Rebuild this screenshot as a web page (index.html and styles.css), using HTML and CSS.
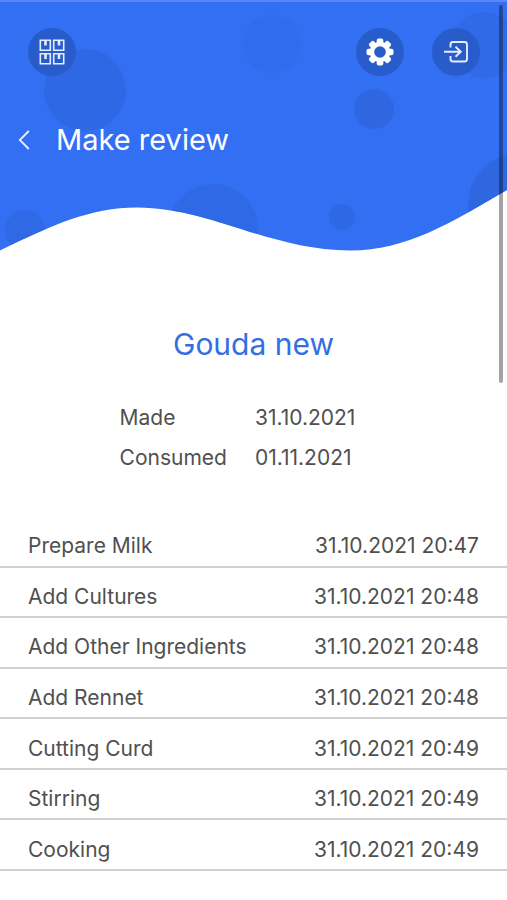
FILE: index.html
```html
<!DOCTYPE html>
<html lang="en">
<head>
<meta charset="utf-8">
<meta name="viewport" content="width=device-width, initial-scale=1">
<title>Make review</title>
<link rel="stylesheet" href="styles.css">
</head>
<body>
<header class="hero">
  <svg class="hero-art" viewBox="0 0 507 252" preserveAspectRatio="none" aria-hidden="true">
    <defs>
      <clipPath id="wave">
        <path d="M0 0H507V190C450 223 407 250.500 350 250.500C270 250.500 210 207.500 137 207.500C90 207.500 50 226 0 250.500Z"/>
      </clipPath>
    </defs>
    <g clip-path="url(#wave)">
      <rect width="507" height="252" fill="#336ff3"/>
      <rect width="507" height="2" fill="#5788f5"/>
      <g fill="#2f67e0">
        <circle cx="85" cy="90" r="41" opacity=".85"/>
        <circle cx="272" cy="44" r="29" opacity=".35"/>
        <circle cx="484" cy="45" r="33" opacity=".6"/>
        <circle cx="374" cy="109" r="20"/>
        <circle cx="25" cy="230" r="20" opacity=".7"/>
        <circle cx="213" cy="229" r="45" opacity=".7"/>
        <circle cx="342" cy="217" r="13" opacity=".85"/>
        <circle cx="520" cy="205" r="52"/>
      </g>
    </g>
  </svg>
  <nav class="toolbar">
    <button class="round" type="button" aria-label="Inventory">
      <svg width="26" height="26" viewBox="0 0 26 26" fill="none" stroke="#e4edff" stroke-width="1.600">
        <path d="M1.300 1.300h10v10h-10zM14.700 1.300h10v10h-10zM1.300 14.700h10v10h-10zM14.700 14.700h10v10h-10z"/>
        <path stroke-width="2.600" d="M6.500 1.300v5.200M20 1.300v5.200M6.500 14.700v5.200M20 14.700v5.200"/>
      </svg>
    </button>
    <button class="round settings" type="button" aria-label="Settings">
      <svg width="28" height="28" viewBox="0 0 28 28">
        <g fill="#fff">
          <g>
            <rect x="10.700" y=".5" width="6.600" height="27" rx="2"/>
            <rect x=".5" y="10.700" width="27" height="6.600" rx="2"/>
          </g>
          <g transform="rotate(45 14 14)">
            <rect x="10.700" y=".5" width="6.600" height="27" rx="2"/>
            <rect x=".5" y="10.700" width="27" height="6.600" rx="2"/>
          </g>
          <circle cx="14" cy="14" r="10.200"/>
        </g>
        <circle cx="14" cy="14" r="5.800" fill="#285ccb"/>
      </svg>
    </button>
    <button class="round" type="button" aria-label="Log out">
      <svg width="26" height="26" viewBox="0 0 26 26" fill="none" stroke="#e4edff" stroke-width="1.900">
        <path d="M7.500 8.500V5.500a2.500 2.500 0 0 1 2.500-2.500H21.500a2.500 2.500 0 0 1 2.500 2.500V20a2.500 2.500 0 0 1-2.500 2.500H10a2.500 2.500 0 0 1-2.500-2.500V17"/>
        <path d="M1 12.800H17.500M12.500 7.800L17.800 12.800L12.500 17.800"/>
      </svg>
    </button>
  </nav>
  <div class="titlebar">
    <button class="back" type="button" aria-label="Back">
      <svg width="12" height="20" viewBox="0 0 12 20" fill="none" stroke="#e9f0ff" stroke-width="1.800"><path d="M10.800 1L1.800 10L10.800 19"/></svg>
    </button>
    <h1>Make review</h1>
  </div>
</header>
<main>
  <h2>Gouda new</h2>
  <dl class="dates">
    <dt>Made</dt><dd>31.10.2021</dd>
    <dt>Consumed</dt><dd>01.11.2021</dd>
  </dl>
  <table class="steps">
    <tbody>
      <tr><th scope="row">Prepare Milk</th><td>31.10.2021 20:47</td></tr>
      <tr><th scope="row">Add Cultures</th><td>31.10.2021 20:48</td></tr>
      <tr><th scope="row">Add Other Ingredients</th><td>31.10.2021 20:48</td></tr>
      <tr><th scope="row">Add Rennet</th><td>31.10.2021 20:48</td></tr>
      <tr><th scope="row">Cutting Curd</th><td>31.10.2021 20:49</td></tr>
      <tr><th scope="row">Stirring</th><td>31.10.2021 20:49</td></tr>
      <tr><th scope="row">Cooking</th><td>31.10.2021 20:49</td></tr>
    </tbody>
  </table>
</main>
<div class="scroll-thumb" aria-hidden="true"></div>
</body>
</html>
```
FILE: styles.css
```css
* { box-sizing: border-box; }

body {
  margin: 0;
  position: relative;
  background: #fff;
  color: #505050;
  font-family: Inter, "Liberation Sans", sans-serif;
  font-size: 21px;
  line-height: 28px;
}

button {
  border: 0;
  padding: 0;
  background: none;
  display: grid;
  place-items: center;
}

.hero {
  position: relative;
  isolation: isolate;
  min-height: 252px;
  padding: 28px 27px 0 28px;
}

.hero-art {
  position: absolute;
  inset: 0;
  z-index: -1;
  width: 100%;
  height: 100%;
}

.toolbar {
  display: flex;
  gap: 28px;
}

.round {
  width: 48px;
  height: 48px;
  border-radius: 50%;
  background: #285ccb;
}

.settings { margin-left: auto; }

.titlebar {
  display: flex;
  align-items: center;
  gap: 16px;
  margin: 44px 0 0 -16px;
}

.back {
  width: 28px;
  height: 40px;
  padding-right: 4px;
}

h1 {
  margin: 0;
  color: #fff;
  font-size: 29px;
  font-weight: 400;
  line-height: 40px;
}

h2 {
  margin: 72px 0 0;
  color: #336ee2;
  font-size: 30px;
  font-weight: 400;
  line-height: 40px;
  text-align: center;
}

.dates {
  display: grid;
  grid-template-columns: max-content max-content;
  justify-content: center;
  gap: 12px 28px;
  margin: 40px 0 0;
  padding-right: 32px;
}

.dates dd { margin: 0; }

.steps {
  width: 100%;
  height: 354px;
  margin-top: 45px;
  border-collapse: separate;
  border-spacing: 0;
}

.steps th,
.steps td {
  padding: 10px 28px 0;
  border-bottom: 2px solid #d0d0d0;
  font-weight: 400;
  text-align: left;
  white-space: nowrap;
}

.steps td { text-align: right; }

.scroll-thumb {
  position: absolute;
  top: 5px;
  right: 4px;
  width: 4px;
  height: 378px;
  border-radius: 2px;
  background: rgba(0, 0, 0, .36);
}
```
